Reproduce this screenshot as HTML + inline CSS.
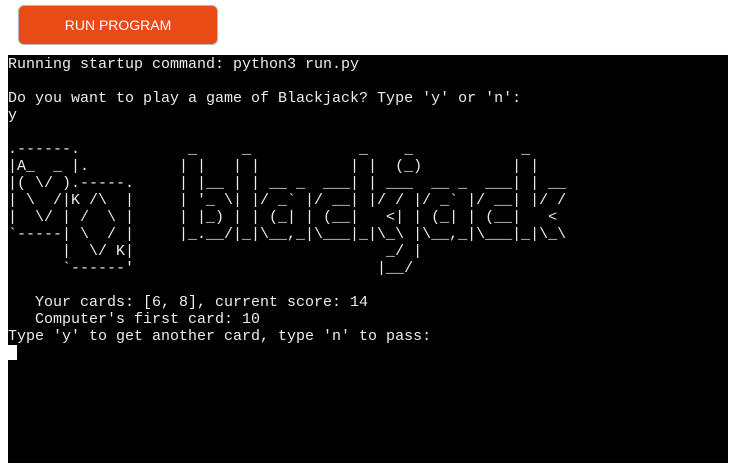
<!DOCTYPE html>
<html><head><meta charset="utf-8"><style>
html,body{margin:0;padding:0;background:#fff;width:742px;height:473px;overflow:hidden}
.btn{position:absolute;left:18px;top:5px;width:198px;height:38px;background:#e84b15;border:1px solid #b8b8b8;border-radius:6px;color:#fff;font-family:"Liberation Sans",sans-serif;font-size:14px;line-height:38px;text-align:center}
.term{position:absolute;left:8px;top:55px;width:720px;height:408px;background:#000}
pre{margin:0;position:absolute;left:0;top:1px;font-family:"Liberation Mono",monospace;font-size:15px;line-height:17px;color:#ececec;white-space:pre}
.cur{position:absolute;left:0;top:290px;width:9px;height:15px;background:#fff}
</style></head><body>
<div class="btn">RUN PROGRAM</div>
<div class="term"><pre>Running startup command: python3 run.py

Do you want to play a game of Blackjack? Type 'y' or 'n':
y

.------.            _     _            _    _            _
|A_  _ |.          | |   | |          | |  (_)          | |
|( \/ ).-----.     | |__ | | __ _  ___| | ___  __ _  ___| | __
| \  /|K /\  |     | '_ \| |/ _` |/ __| |/ / |/ _` |/ __| |/ /
|  \/ | /  \ |     | |_) | | (_| | (__|   &lt;| | (_| | (__|   &lt;
`-----| \  / |     |_.__/|_|\__,_|\___|_|\_\ |\__,_|\___|_|\_\
      |  \/ K|                            _/ |
      `------'                           |__/

   Your cards: [6, 8], current score: 14
   Computer's first card: 10
Type 'y' to get another card, type 'n' to pass:</pre><div class="cur"></div></div>
</body></html>
